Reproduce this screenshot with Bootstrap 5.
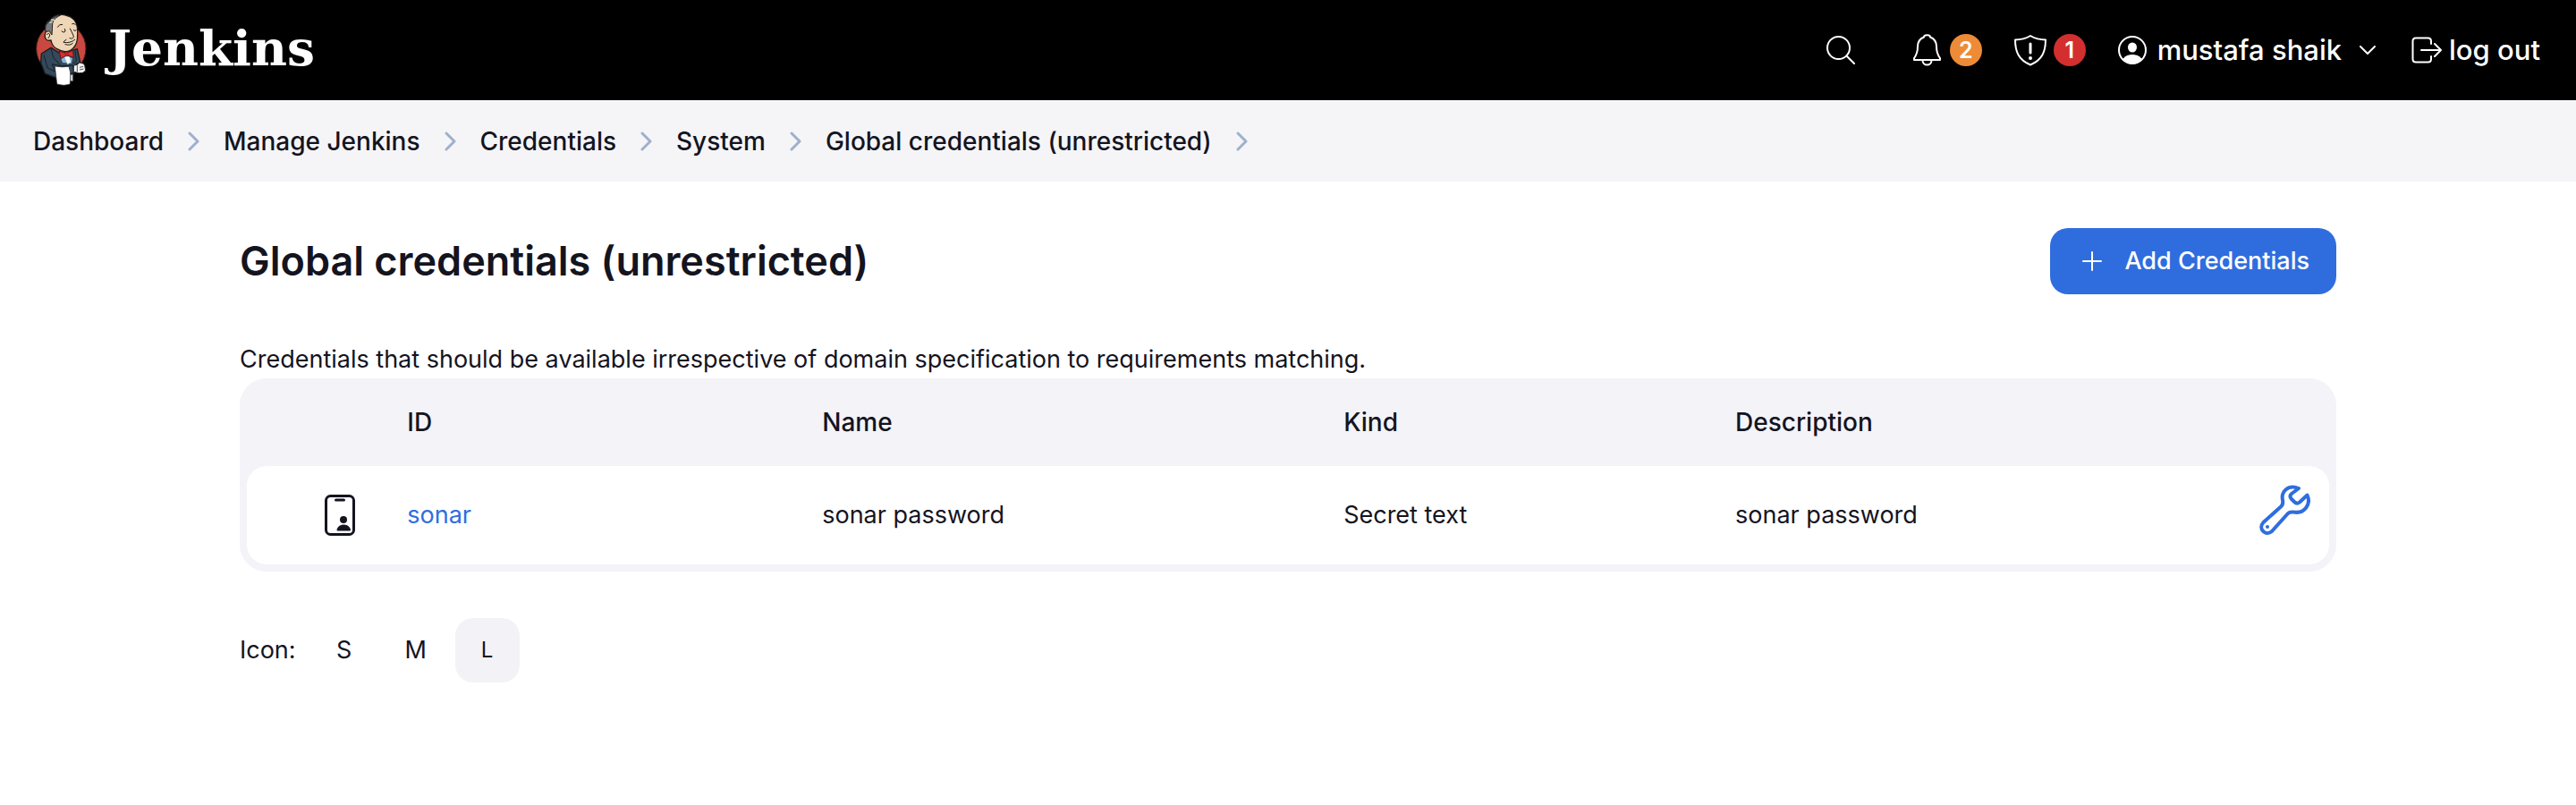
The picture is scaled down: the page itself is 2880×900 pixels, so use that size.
<!DOCTYPE html>
<html lang="en">
<head>
<meta charset="utf-8">
<meta name="viewport" content="width=device-width, initial-scale=1">
<title>Global credentials (unrestricted) - Jenkins</title>
<link href="https://cdn.jsdelivr.net/npm/bootstrap@5.3.0/dist/css/bootstrap.min.css" rel="stylesheet">
<style>
  :root { --ink: #14141f; --accent: #2f6ddf; --panel: #f3f3f8; }
  body { font-family: Inter, "Liberation Sans", sans-serif; font-size: 27px; line-height: 40px; color: var(--ink); background: #fff; }
  a { text-decoration: none; color: inherit; }
  svg { display: block; flex-shrink: 0; }
  .topbar { min-height: 112px; padding: 0 40px; background: #000; color: #fff; font-size: 31px; font-weight: 500; }
  .brand-name { font-family: "DejaVu Serif", serif; font-weight: 700; font-size: 55px; line-height: 64px; padding-bottom: 4px; }
  .plain-btn { border: 0; background: none; color: inherit; padding: 0; font-weight: inherit; }
  .count { width: 36px; height: 36px; border-radius: 50%; font-size: 25px; line-height: 36px; font-weight: 600; text-align: center; }
  .count-warn { background: #ee8b37; }
  .count-alert { background: #d32f2f; }
  .tools { gap: 36px; }
  .search-btn { margin-right: 28px; }
  .user-menu { gap: 20px; }
  .crumbs { min-height: 91px; padding: 0 37px; gap: 27px; background: #f5f5f8; font-size: 28px; font-weight: 500; margin: 0; }
  .crumbs svg { color: #9fb0cb; }
  .page-body { padding: 52px 268px 0; }
  .page-body h1 { font-size: 45px; line-height: 56px; font-weight: 600; margin: 0; }
  .add-btn { height: 74px; padding: 0 30px 0 36px; gap: 25px; border: 0; border-radius: 20px; background: var(--accent); color: #fff; font-weight: 500; }
  .intro { margin: 53px 0 1px; }
  .cred-panel { padding: 0 8px 8px; border-radius: 30px; background: var(--panel); }
  .cred-table { width: 100%; table-layout: fixed; border-collapse: separate; border-spacing: 0; }
  .cred-table th { height: 98px; font-size: 28px; font-weight: 500; padding: 0; }
  .cred-table td { height: 110px; background: #fff; padding: 0; }
  .cred-table td:first-child { border-radius: 22px 0 0 22px; padding-left: 86px; }
  .cred-table td:last-child { border-radius: 0 22px 22px 0; padding: 0 21px 12px 0; }
  .c-icon { width: 7.7%; } .c-id { width: 19.93%; } .c-name { width: 25.04%; } .c-kind { width: 18.81%; } .c-tool { width: 7%; }
  .cred-link { color: var(--accent); }
  .sizes { margin-top: 52px; gap: 18px; }
  .size-item { width: 72px; height: 72px; border-radius: 20px; }
  .size-on { background: #f2f2f7; font-size: 24px; }
</style>
</head>
<body>
<header class="topbar d-flex align-items-center justify-content-between">
  <a href="#" class="d-flex align-items-center">
    <svg width="57" height="82" viewBox="117 45 171 246" aria-hidden="true">
      <ellipse cx="202" cy="163" rx="83" ry="86" fill="#c9483f" stroke="#48211f" stroke-width="3"/>
      <path d="M136 180l32-20 32 20 30-8 26-8 10 45-16 8-4 30-60 14-38-14-14-36z" fill="#34495b" stroke="#151c22" stroke-width="4" stroke-linejoin="round"/>
      <path d="M144 184l12 44 26 12M168 163l8 30 22 24M249 170l4 32-10 12" fill="none" stroke="#172029" stroke-width="3"/>
      <path d="M151 106c-5-18-2-31 16-41 14-18 38-18 55-12 30 8 36 31 35 60 1 24-3 37-14 48-14 16-38 14-55 3-15-8-18-18-20-29-16 4-22-7-20-18 1-8 3-11 3-11z" fill="#eed6b6" stroke="#211d1b" stroke-width="4"/>
      <path d="M151 107c-4-18 0-28 12-35 8-12 24-20 37-21-16 7-26 17-27 30l-2 36-9-13z" fill="#77797b" stroke="#242424" stroke-width="3"/>
      <path d="M163 76l10-3M168 66l13 2" stroke="#d7d7d7" stroke-width="4"/>
      <path d="M154 116q9-10 10 4l-5 8M190 91q6-12 16-9M239 80q8-5 11 3M204 105q8 7 12 0l-2-8M244 101q6 6 9 0M232 96q12 23 12 28-3 8-13 4M219 133q-9 5-9 9 23 4 38-9M216 149q17 5 25-4" fill="none" stroke="#211d1b" stroke-width="3" stroke-linecap="round"/>
      <path d="M201 195l17-8 22 8-4 18-29-3z" fill="#86b6d4"/>
      <path d="M214 191l15-2 5 18-10 10z" fill="#f6f6f2"/>
      <path d="M195 171l23 7 24-9 2 24-23-8-20 12z" fill="#d92d30" stroke="#52191b" stroke-width="3" stroke-linejoin="round"/>
      <ellipse cx="220" cy="181" rx="6" ry="7" fill="#b92226"/>
      <path d="M172 215q28 9 70 4l2 25-14 3-44 1z" fill="#34495b" stroke="#151c22" stroke-width="3"/>
      <path d="M181 222q25 5 47 1l5 20-1 39q-20 8-44 0z" fill="#fff" stroke="#202020" stroke-width="2"/>
      <path d="M233 250h9v22h-9" fill="#ccc" stroke="#444" stroke-width="2"/>
      <path d="M244 220l14-4 4-6q13 0 19 8l3 19q-8 10-22 8l-18-4z" fill="#f5f5f5" stroke="#292929" stroke-width="3"/>
      <path d="M256 219v22M264 226l12-3M264 234l13-3" stroke="#555" stroke-width="3"/>
    </svg>
    <span class="brand-name ms-4">Jenkins</span>
  </a>
  <div class="tools d-flex align-items-center">
    <button type="button" class="plain-btn search-btn" aria-label="Search">
      <svg width="32" height="32" viewBox="0 0 32 32" fill="none" stroke="currentColor" stroke-width="2" stroke-linecap="round"><circle cx="13.5" cy="13.5" r="12.5"/><path d="M22.500 22.500L31 31"/></svg>
    </button>
    <a href="#" class="d-flex align-items-center" aria-label="Notifications">
      <svg class="me-2" width="34" height="36" viewBox="0 0 34 36" fill="none" stroke="currentColor" stroke-width="2" stroke-linejoin="round"><path d="M13 3.500C13 .500 20 .500 20 3.500C25 5.500 27 9.500 27 14C27 20 28 23 31 27V29H2V27C5 23 6 20 6 14C6 9.500 8 5.500 13 3.500Z"/><path d="M11.500 29.500C11.500 36.300 21.500 36.300 21.500 29.500"/></svg>
      <span class="count count-warn">2</span>
    </a>
    <a href="#" class="d-flex align-items-center" aria-label="Security warnings">
      <svg class="me-2" width="36" height="36" viewBox="0 0 36 36" fill="none" stroke="currentColor" stroke-width="2" stroke-linecap="round" stroke-linejoin="round"><path d="M18 2C13 5 7 6.500 1 6.500C1 20 5 29 18 34.500C31 29 35 20 35 6.500C29 6.500 23 5 18 2Z"/><path d="M18 11V21" stroke-width="3"/><circle cx="18" cy="27" r="1" fill="currentColor"/></svg>
      <span class="count count-alert">1</span>
    </a>
    <div class="user-menu d-flex align-items-center">
      <a href="#" class="d-flex align-items-center">
        <svg width="32" height="32" viewBox="0 0 32 32"><circle cx="16" cy="16" r="15" fill="none" stroke="currentColor" stroke-width="2"/><ellipse cx="16" cy="13" rx="5" ry="5.500" fill="currentColor"/><path d="M5 27C8 19 24 19 27 27C21 33 11 33 5 27Z" fill="currentColor"/></svg>
        <span class="ms-2 ps-1">mustafa shaik</span>
      </a>
      <button type="button" class="plain-btn me-1" aria-label="User menu">
        <svg width="18" height="12" viewBox="0 0 18 12" fill="none" stroke="currentColor" stroke-width="2" stroke-linecap="round" stroke-linejoin="round"><path d="M1 2L9 10L17 2"/></svg>
      </button>
    </div>
    <a href="#" class="d-flex align-items-center">
      <svg width="34" height="30" viewBox="0 0 34 30" fill="none" stroke="currentColor" stroke-width="2" stroke-linecap="round" stroke-linejoin="round"><path d="M22 8V5Q22 1.500 18.500 1.500H5Q1.500 1.500 1.500 5V25Q1.500 28.500 5 28.500H18.500Q22 28.500 22 25V22M11 15H33M26 8L33 15L26 22"/></svg>
      <span class="ms-2">log out</span>
    </a>
  </div>
</header>

<nav aria-label="Breadcrumb">
  <ol class="crumbs list-unstyled d-flex align-items-center">
    <li><a href="#">Dashboard</a></li>
    <li aria-hidden="true"><svg width="13" height="22" viewBox="0 0 13 22" fill="none" stroke="currentColor" stroke-width="3" stroke-linecap="round" stroke-linejoin="round"><path d="M2 2L11 11L2 20"/></svg></li>
    <li><a href="#">Manage Jenkins</a></li>
    <li aria-hidden="true"><svg width="13" height="22" viewBox="0 0 13 22" fill="none" stroke="currentColor" stroke-width="3" stroke-linecap="round" stroke-linejoin="round"><path d="M2 2L11 11L2 20"/></svg></li>
    <li><a href="#">Credentials</a></li>
    <li aria-hidden="true"><svg width="13" height="22" viewBox="0 0 13 22" fill="none" stroke="currentColor" stroke-width="3" stroke-linecap="round" stroke-linejoin="round"><path d="M2 2L11 11L2 20"/></svg></li>
    <li><a href="#">System</a></li>
    <li aria-hidden="true"><svg width="13" height="22" viewBox="0 0 13 22" fill="none" stroke="currentColor" stroke-width="3" stroke-linecap="round" stroke-linejoin="round"><path d="M2 2L11 11L2 20"/></svg></li>
    <li><a href="#">Global credentials (unrestricted)</a></li>
    <li aria-hidden="true"><svg width="13" height="22" viewBox="0 0 13 22" fill="none" stroke="currentColor" stroke-width="3" stroke-linecap="round" stroke-linejoin="round"><path d="M2 2L11 11L2 20"/></svg></li>
  </ol>
</nav>

<main class="page-body">
  <div class="d-flex align-items-center justify-content-between">
    <h1>Global credentials (unrestricted)</h1>
    <button type="button" class="add-btn d-flex align-items-center">
      <svg width="22" height="22" viewBox="0 0 22 22" stroke="currentColor" stroke-width="2" stroke-linecap="round"><path d="M11 1V21M1 11H21"/></svg>
      Add Credentials
    </button>
  </div>
  <p class="intro">Credentials that should be available irrespective of domain specification to requirements matching.</p>
  <div class="cred-panel">
    <table class="cred-table">
      <thead>
        <tr><th class="c-icon"></th><th class="c-id" scope="col">ID</th><th class="c-name" scope="col">Name</th><th class="c-kind" scope="col">Kind</th><th scope="col">Description</th><th class="c-tool"></th></tr>
      </thead>
      <tbody>
        <tr>
          <td><svg width="36" height="52" viewBox="0 0 36 52"><rect x="2.500" y="4.500" width="31" height="43" rx="5" fill="none" stroke="currentColor" stroke-width="3"/><path d="M13.500 9H22.500" stroke="currentColor" stroke-width="3" stroke-linecap="round"/><circle cx="22" cy="31" r="4" fill="currentColor"/><path d="M15 43C15 35 29.500 35 29.500 43Z" fill="currentColor" stroke="currentColor" stroke-linejoin="round"/></svg></td>
          <td><a href="#" class="cred-link">sonar</a></td>
          <td>sonar password</td>
          <td>Secret text</td>
          <td>sonar password</td>
          <td><a href="#" class="cred-link d-flex justify-content-end" aria-label="Update"><svg width="58" height="58" viewBox="0 0 58 58" fill="none" stroke="currentColor" stroke-width="4" stroke-linecap="round" stroke-linejoin="round"><path d="M45 5C33 0 25 9 27 18Q28 23 25 25.500L5.500 43C-1 50 8 59 15 53L33 33Q35 31 39 31.500C52 34 59 22 54.500 12.500L46 20.500Q43 23 40 20L37 17Q34 14 37 11L45 5Z"/><circle cx="10" cy="48" r="2" fill="currentColor" stroke="none"/></svg></a></td>
        </tr>
      </tbody>
    </table>
  </div>
  <div class="sizes d-flex align-items-center">
    <span>Icon:</span>
    <div class="d-flex gap-2">
      <a href="#" class="size-item d-flex align-items-center justify-content-center">S</a>
      <a href="#" class="size-item d-flex align-items-center justify-content-center">M</a>
      <a href="#" class="size-item size-on d-flex align-items-center justify-content-center" aria-current="true">L</a>
    </div>
  </div>
</main>
<script src="https://cdn.jsdelivr.net/npm/bootstrap@5.3.0/dist/js/bootstrap.bundle.min.js"></script>
</body>
</html>
